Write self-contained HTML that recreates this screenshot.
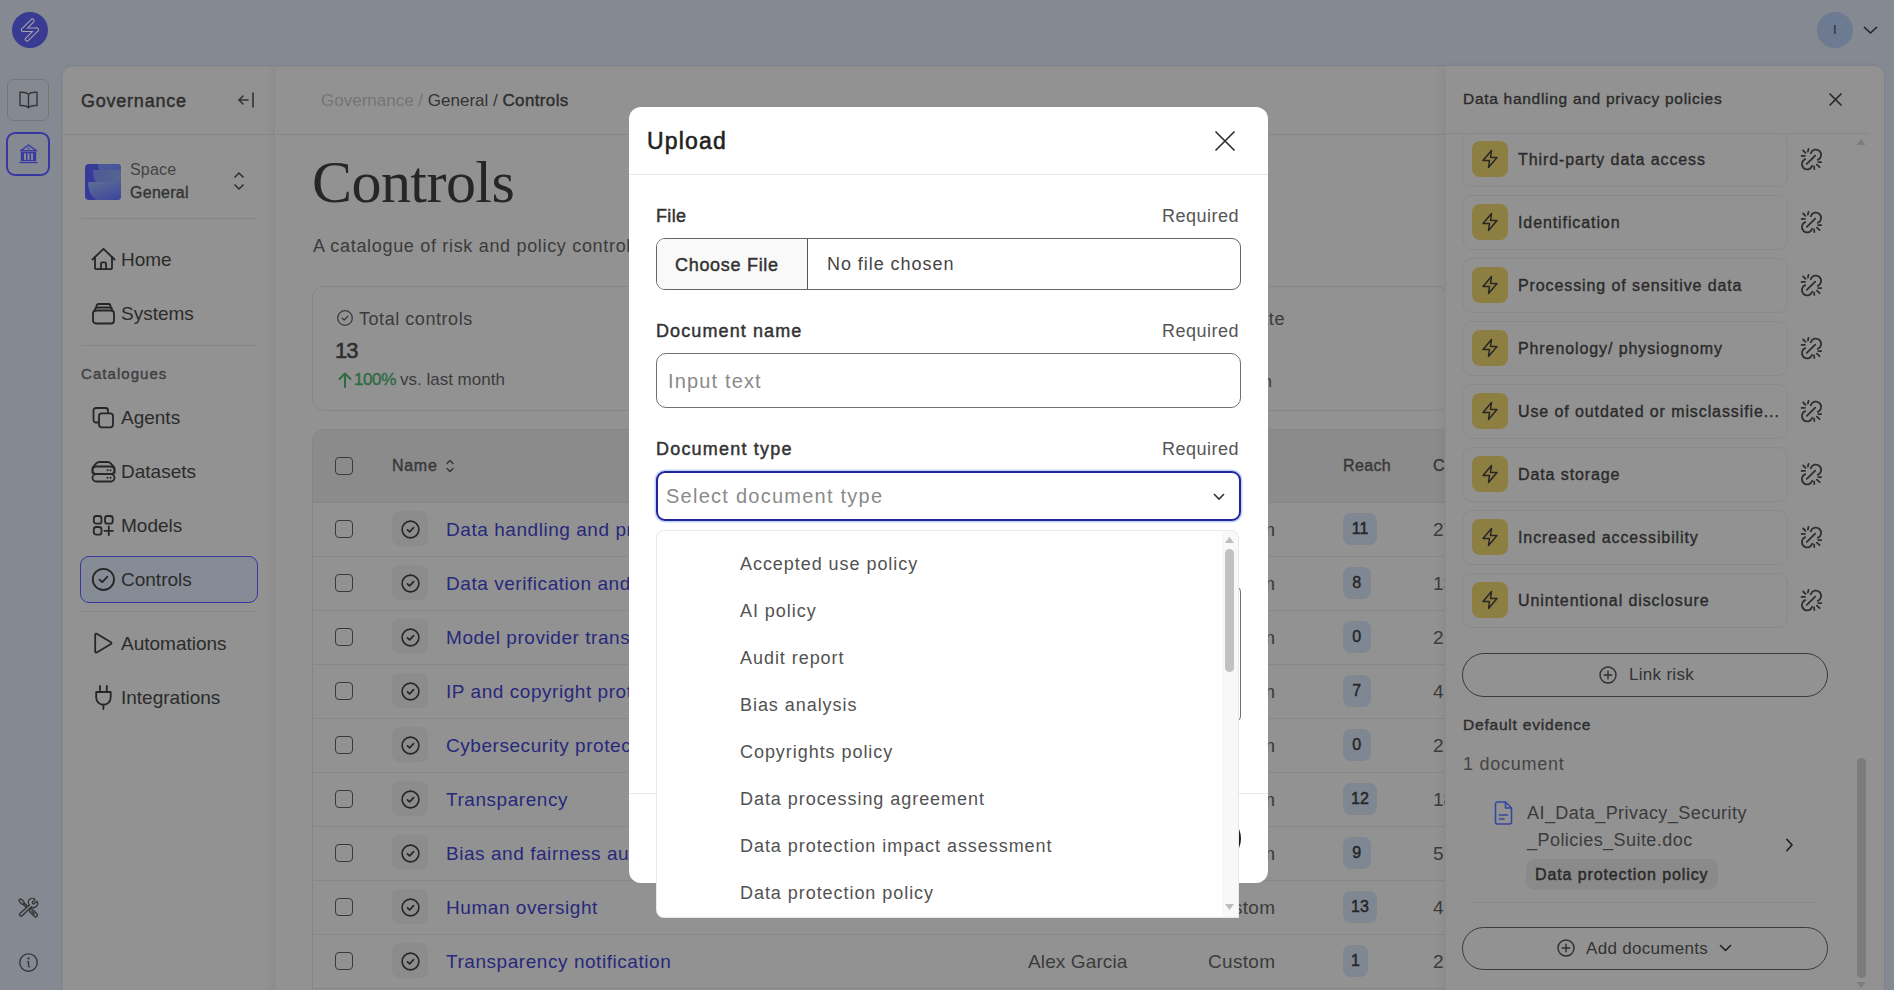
<!DOCTYPE html>
<html><head><meta charset="utf-8">
<style>
*{box-sizing:border-box;margin:0;padding:0}
html,body{width:1894px;height:990px;overflow:hidden}
body{background:#858a92;font-family:"Liberation Sans",sans-serif;position:relative;color:#2e2e2e}
.a{position:absolute}
.t{position:absolute;white-space:nowrap;line-height:24px;height:24px}
svg{position:absolute;overflow:visible}
.ln{position:absolute;height:1px;background:#868686}
</style></head><body>

<!-- top bar -->
<div class="a" style="left:12px;top:12px;width:36px;height:36px;border-radius:50%;background:#383b91"></div>
<svg style="left:10px;top:10px" width="40" height="40" viewBox="0 0 40 40" fill="none" stroke-linecap="round">
  <g stroke="#a3a3ae" stroke-width="4.6"><path d="M13.3 19.8 L22.3 10.8"/><path d="M13.3 19.8 L26.6 19.8"/><path d="M26.6 19.8 L17 29.3"/></g>
  <g stroke="#383b91" stroke-width="2.4"><path d="M13.3 19.8 L22.3 10.8"/><path d="M13.3 19.8 L26.6 19.8"/><path d="M26.6 19.8 L17 29.3"/></g>
</svg>
<div class="a" style="left:1817px;top:12px;width:36px;height:36px;border-radius:50%;background:#6c7b92"></div>
<div class="t" style="left:1833px;top:18px;font-size:13px;color:#2a2a2a">I</div>
<svg style="left:1863px;top:26px" width="15" height="8" viewBox="0 0 15 8" fill="none" stroke="#222" stroke-width="1.6"><path d="M1 1 L7.5 7 L14 1"/></svg>

<!-- left rail -->
<div class="a" style="left:7px;top:79px;width:42px;height:42px;border:1px solid #767676;border-radius:7px"></div>
<svg style="left:19px;top:91px" width="19" height="18" viewBox="0 0 19 18" fill="none" stroke="#363636" stroke-width="1.4" stroke-linejoin="round" stroke-linecap="round"><path d="M9.5 3.2 C8 1.6 5 0.9 1 1.3 V14.6 C5 14.2 8 15 9.5 16.8 C11 15 14 14.2 18 14.6 V1.3 C14 0.9 11 1.6 9.5 3.2 Z M9.5 3.2 V16.5"/></svg>
<div class="a" style="left:6px;top:132px;width:44px;height:44px;border:2.5px solid #3838a3;border-radius:9px"></div>
<svg style="left:19px;top:144px" width="19" height="20" viewBox="0 0 19 20"><path d="M9.5 1 L17.5 6.8 H1.5 Z" fill="none" stroke="#3a3aa3" stroke-width="1.5" stroke-linejoin="round"/><circle cx="9.5" cy="4.6" r="1" fill="#3a3aa3"/><path d="M1.8 8 H17.2 V17 H1.8 Z M5 9.2 V16 H7 V9.2 Z M8.5 9.2 V16 H10.5 V9.2 Z M12 9.2 V16 H14 V9.2 Z" fill="#3a3aa3" fill-rule="evenodd"/><rect x="0.5" y="17.8" width="18" height="1.4" fill="#3a3aa3"/></svg>
<svg style="left:14px;top:894px" width="28" height="28" viewBox="0 0 28 28" fill="none" stroke="#353535" stroke-width="1.4" stroke-linecap="round" stroke-linejoin="round">
<rect x="-2.9" y="-1.5" width="5.8" height="3" rx="1.5" transform="translate(7.6 7.6) rotate(45)"/>
<path d="M10.6 9.4 L13.3 12.1 M9.4 10.6 L12.1 13.3"/>
<rect x="-4.9" y="-1.8" width="9.8" height="3.6" rx="1.8" transform="translate(19.4 18.9) rotate(45)"/>
<path d="M17.7 17.3 L20.3 19.9"/>
<path d="M21.0 5.5 A3.9 3.9 0 0 0 15.4 11.0 L6.0 19.5 A1.55 1.55 0 0 0 8.2 21.7 L17.3 12.7 A3.9 3.9 0 0 0 22.77 7.24 L20.43 9.58 A1.25 1.25 0 0 1 18.67 7.82 Z"/>
</svg>
<svg style="left:19px;top:953px" width="19" height="19" viewBox="0 0 19 19" fill="none" stroke="#363636" stroke-width="1.35" stroke-linecap="round" stroke-linejoin="round"><circle cx="9.5" cy="9.5" r="8.7"/><path d="M8.6 8.6 H9.5 V12.9 Q9.6 13.8 10.5 13.9"/><circle cx="9.5" cy="5.4" r="0.45" fill="#363636"/></svg>

<!-- main panel -->
<div class="a" style="left:62px;top:66px;width:1822px;height:940px;background:#929292;border-radius:10px;border:1px solid #8a8a8a;box-shadow:0 0 2px rgba(60,70,90,0.25)"></div>

<!-- sidebar -->
<div class="a" style="left:266px;top:67px;width:8px;height:930px;background:linear-gradient(90deg,rgba(0,0,0,0),rgba(0,0,0,0.035))"></div><div class="a" style="left:274px;top:67px;width:1px;height:930px;background:#8a8a8a"></div>
<div class="t" style="left:81px;top:89px;font-size:18px;color:#2e2e2e;-webkit-text-stroke:0.45px #2e2e2e;letter-spacing:0.77px">Governance</div>
<svg style="left:237px;top:92px" width="18" height="16" viewBox="0 0 18 16" fill="none" stroke="#333" stroke-width="1.6" stroke-linecap="round"><path d="M16 1 V15 M11 8 H2 M6 4 L2 8 L6 12"/></svg>
<div class="ln" style="left:62px;top:134px;width:213px"></div>

<div class="a" style="left:85px;top:164px;width:36px;height:36px;border-radius:4px;background:#383a9a;overflow:hidden">
<div class="a" style="left:13px;top:0;width:30px;height:6px;border-bottom-left-radius:2px 6px;background:linear-gradient(90deg,#4a5a98,#44539a)"></div>
<div class="a" style="left:7.5px;top:6px;width:36px;height:11.5px;border-bottom-left-radius:4px 11.5px;background:linear-gradient(90deg,#4c5b96,#56688f)"></div>
<div class="a" style="left:3.3px;top:17.5px;width:40px;height:19px;border-bottom-left-radius:13px 19px;background:linear-gradient(160deg,#5a6b95 10%,#46529a 60%,#3a3f9c)"></div>
</div>
<div class="t" style="left:130px;top:158px;font-size:16px;color:#444;letter-spacing:0.2px">Space</div>
<div class="t" style="left:130px;top:181px;font-size:16px;color:#333;-webkit-text-stroke:0.35px #333;letter-spacing:0.27px">General</div>
<svg style="left:233px;top:172px" width="12" height="18" viewBox="0 0 12 18" fill="none" stroke="#2e2e2e" stroke-width="1.5"><path d="M1.5 5.5 L6 1 L10.5 5.5 M1.5 12.5 L6 17 L10.5 12.5"/></svg>
<div class="ln" style="left:81px;top:218px;width:176px"></div>

<div class="ln" style="left:81px;top:345px;width:176px"></div>
<div class="t" style="left:81px;top:362px;font-size:15px;color:#404040;-webkit-text-stroke:0.4px #404040;letter-spacing:1.05px">Catalogues</div>
<div class="a" style="left:80px;top:556px;width:178px;height:47px;border:1px solid #3838a0;border-radius:9px;background:#868c95"></div>
<div class="ln" style="left:81px;top:611px;width:176px"></div>


<svg style="left:91px;top:247px" width="25" height="24" viewBox="0 0 25 24" fill="none" stroke="#262626" stroke-width="1.8" stroke-linecap="round" stroke-linejoin="round"><path d="M1.5 12.5 L12.5 1.8 L23.5 12.5"/><path d="M4 10 V21 a1.2 1.2 0 0 0 1.2 1.2 H19.8 a1.2 1.2 0 0 0 1.2 -1.2 V10"/><path d="M10 22 V16.5 a1.2 1.2 0 0 1 1.2 -1.2 H13.8 a1.2 1.2 0 0 1 1.2 1.2 V22"/></svg>
<div class="t" style="left:121px;top:248px;font-size:19px;color:#2b2b2b">Home</div>
<svg style="left:91px;top:301px" width="25" height="24" viewBox="0 0 25 24" fill="none" stroke="#262626" stroke-width="1.8" stroke-linecap="round" stroke-linejoin="round"><rect x="2" y="9.5" width="21" height="13" rx="3"/><path d="M4 9.5 V8.5 a2 2 0 0 1 2 -2 H19 a2 2 0 0 1 2 2 V9.5"/><path d="M5.5 6.5 V5 a2 2 0 0 1 2 -2 H17.5 a2 2 0 0 1 2 2 V6.5"/></svg>
<div class="t" style="left:121px;top:302px;font-size:19px;color:#2b2b2b">Systems</div>
<svg style="left:91px;top:405px" width="25" height="24" viewBox="0 0 25 24" fill="none" stroke="#262626" stroke-width="1.8" stroke-linecap="round" stroke-linejoin="round"><path d="M7.5 17.5 H5 a2.5 2.5 0 0 1 -2.5 -2.5 V5.5 a2.5 2.5 0 0 1 2.5 -2.5 H14.5 a2.5 2.5 0 0 1 2.5 2.5 V8"/><rect x="8" y="8.3" width="14" height="14" rx="2.8"/></svg>
<div class="t" style="left:121px;top:406px;font-size:19px;color:#2b2b2b">Agents</div>
<svg style="left:91px;top:459px" width="25" height="24" viewBox="0 0 25 24" fill="none" stroke="#262626" stroke-width="1.8" stroke-linecap="round" stroke-linejoin="round"><path d="M1.5 14 V9.5 a3 3 0 0 1 1 -2.2 L5.5 4.2 a4 4 0 0 1 2.8 -1.2 H16.7 a4 4 0 0 1 2.8 1.2 L22.5 7.3 a3 3 0 0 1 1 2.2 V14"/><rect x="1.5" y="7.5" width="22" height="7.5" rx="3.7"/><rect x="1.5" y="15" width="22" height="7.5" rx="3.7"/><path d="M16.5 11.2 h0.1 M19.5 11.2 h0.1 M16.5 18.7 h0.1 M19.5 18.7 h0.1" stroke-width="1.9"/></svg>
<div class="t" style="left:121px;top:460px;font-size:19px;color:#2b2b2b">Datasets</div>
<svg style="left:91px;top:513px" width="25" height="24" viewBox="0 0 25 24" fill="none" stroke="#262626" stroke-width="1.8" stroke-linecap="round" stroke-linejoin="round"><rect x="2.8" y="3" width="7.7" height="7.7" rx="2.5"/><rect x="14" y="3" width="7.7" height="7.7" rx="2.5"/><rect x="2.8" y="14" width="7.7" height="7.7" rx="2.5"/><path d="M17.8 13.5 V22 M13.5 17.8 H22"/></svg>
<div class="t" style="left:121px;top:514px;font-size:19px;color:#2b2b2b">Models</div>
<svg style="left:91px;top:567px" width="25" height="24" viewBox="0 0 25 24" fill="none" stroke="#262626" stroke-width="1.8" stroke-linecap="round" stroke-linejoin="round"><circle cx="12.4" cy="12.4" r="10.6"/><path d="M8.5 12.6 L11.2 15.2 L16.3 9.8"/></svg>
<div class="t" style="left:121px;top:568px;font-size:19px;color:#2b2b2b">Controls</div>
<svg style="left:91px;top:631px" width="25" height="24" viewBox="0 0 25 24" fill="none" stroke="#262626" stroke-width="1.8" stroke-linecap="round" stroke-linejoin="round"><path d="M4.2 3.6 a1 1 0 0 1 1.5 -0.9 L20 11.2 a1 1 0 0 1 0 1.7 L5.7 21.4 a1 1 0 0 1 -1.5 -0.9 Z"/></svg>
<div class="t" style="left:121px;top:632px;font-size:19px;color:#2b2b2b">Automations</div>
<svg style="left:91px;top:685px" width="25" height="24" viewBox="0 0 25 24" fill="none" stroke="#262626" stroke-width="1.8" stroke-linecap="round" stroke-linejoin="round"><path d="M9 1 V7 M15.8 1 V7"/><path d="M5.2 7 H19.7 V12.5 a7.2 7.2 0 0 1 -14.5 0 Z"/><path d="M12.4 19.7 V24"/></svg>
<div class="t" style="left:121px;top:686px;font-size:19px;color:#2b2b2b">Integrations</div>


<!-- main content -->
<div class="t" style="left:321px;top:89px;font-size:17px;color:#757575">Governance <span style="color:#757575">/</span> <span style="color:#333">General /</span> <span style="color:#2e2e2e;-webkit-text-stroke:0.4px #2e2e2e;letter-spacing:0.36px">Controls</span></div>
<div class="ln" style="left:276px;top:134px;width:1170px"></div>
<div class="t" style="left:312px;top:150px;font-size:60px;line-height:64px;height:64px;font-family:'Liberation Serif',serif;color:#262626;letter-spacing:-0.55px">Controls</div>
<div class="t" style="left:313px;top:234px;font-size:18px;color:#3b3b3b;letter-spacing:0.68px">A catalogue of risk and policy controls for your AI systems</div>


<!-- stats cards -->
<div class="a" style="left:312px;top:286px;width:368px;height:125px;border:1px solid #868686;border-radius:12px"></div>
<svg style="left:336px;top:309px" width="18" height="18" viewBox="0 0 18 18" fill="none" stroke="#3a3a3a" stroke-width="1.3" stroke-linecap="round" stroke-linejoin="round"><circle cx="9" cy="9" r="7.3"/><path d="M6.2 9.2 L8.2 11 L11.8 7.2"/></svg>
<div class="t" style="left:359px;top:307px;font-size:18px;color:#3b3b3b;letter-spacing:0.55px">Total controls</div>
<div class="t" style="left:335px;top:339px;font-size:22px;color:#2e2e2e;-webkit-text-stroke:0.55px #2e2e2e;letter-spacing:-1px">13</div>
<svg style="left:338px;top:372px" width="14" height="16" viewBox="0 0 14 16" fill="none" stroke="#2f6b45" stroke-width="2" stroke-linecap="round" stroke-linejoin="round"><path d="M7 15 V2 M1.5 7 L7 1.5 L12.5 7"/></svg>
<div class="t" style="left:354px;top:368px;font-size:17px;color:#2f6b45;-webkit-text-stroke:0.4px #2f6b45;letter-spacing:-0.4px">100%</div>
<div class="t" style="left:400px;top:368px;font-size:17px;color:#3b3b3b">vs. last month</div>
<div class="a" style="left:1078px;top:286px;width:371px;height:125px;border:1px solid #868686;border-radius:12px"></div>
<div class="t" style="right:609px;top:307px;font-size:18px;color:#3b3b3b;letter-spacing:0.55px">Completion rate</div>
<div class="t" style="right:622px;top:370px;font-size:17px;color:#3b3b3b"><b style="color:#2f6b45">&#8593;50%</b> vs. last month</div>

<!-- table -->
<div class="a" style="left:312px;top:429px;width:1141px;height:600px;border:1px solid #868686;border-radius:12px;overflow:hidden">
  <div class="a" style="left:0;top:0;width:100%;height:73px;background:#8b8b8b;border-bottom:1px solid #868686"></div>
</div>
<div class="a" style="left:335px;top:457px;width:18px;height:18px;border:1.5px solid #3a3a3a;border-radius:4px"></div>
<div class="t" style="left:392px;top:454px;font-size:16px;color:#383838;-webkit-text-stroke:0.4px #383838;letter-spacing:0.7px">Name</div>
<svg style="left:445px;top:459px" width="10" height="14" viewBox="0 0 10 14" fill="none" stroke="#333" stroke-width="1.4" stroke-linecap="round" stroke-linejoin="round"><path d="M2 4.5 L5 1.5 L8 4.5 M2 9.5 L5 12.5 L8 9.5"/></svg>
<div class="t" style="left:1343px;top:454px;font-size:16px;color:#383838;-webkit-text-stroke:0.4px #383838;letter-spacing:0.35px">Reach</div>
<div class="t" style="left:1433px;top:454px;font-size:16px;color:#383838;-webkit-text-stroke:0.4px #383838">C</div>
<div class="a" style="left:335px;top:520px;width:18px;height:18px;border:1.5px solid #3a3a3a;border-radius:4px"></div>
<div class="a" style="left:392px;top:511px;width:36px;height:35px;border-radius:8px;background:#8c8c8c"></div>
<svg style="left:401px;top:520px" width="19" height="19" viewBox="0 0 19 19" fill="none" stroke="#262626" stroke-width="1.6" stroke-linecap="round" stroke-linejoin="round"><circle cx="9.5" cy="9.5" r="8.4"/><path d="M6.4 9.8 L8.6 11.9 L12.6 7.6"/></svg>
<div class="t" style="left:446px;top:518px;font-size:19px;color:#28287c;letter-spacing:0.55px">Data handling and privacy policies</div>
<div class="t" style="left:1028px;top:518px;font-size:19px;color:#3b3b3b;letter-spacing:0.12px">Alex Garcia</div>
<div class="t" style="left:1208px;top:518px;font-size:19px;color:#3b3b3b;letter-spacing:0.3px">Custom</div>
<div class="a" style="left:1343px;top:513px;height:32px;width:34px;border-radius:8px;background:#7f8792;font-size:16px;line-height:32px;color:#262626;-webkit-text-stroke:0.45px #262626;text-align:center">11</div>
<div class="t" style="left:1433px;top:518px;font-size:19px;color:#3b3b3b">27</div>
<div class="ln" style="left:314px;top:556px;width:1132px;background:#878787"></div>
<div class="a" style="left:335px;top:574px;width:18px;height:18px;border:1.5px solid #3a3a3a;border-radius:4px"></div>
<div class="a" style="left:392px;top:565px;width:36px;height:35px;border-radius:8px;background:#8c8c8c"></div>
<svg style="left:401px;top:574px" width="19" height="19" viewBox="0 0 19 19" fill="none" stroke="#262626" stroke-width="1.6" stroke-linecap="round" stroke-linejoin="round"><circle cx="9.5" cy="9.5" r="8.4"/><path d="M6.4 9.8 L8.6 11.9 L12.6 7.6"/></svg>
<div class="t" style="left:446px;top:572px;font-size:19px;color:#28287c;letter-spacing:0.55px">Data verification and quality</div>
<div class="t" style="left:1028px;top:572px;font-size:19px;color:#3b3b3b;letter-spacing:0.12px">Alex Garcia</div>
<div class="t" style="left:1208px;top:572px;font-size:19px;color:#3b3b3b;letter-spacing:0.3px">Custom</div>
<div class="a" style="left:1343px;top:567px;height:32px;width:27.5px;border-radius:8px;background:#7f8792;font-size:16px;line-height:32px;color:#262626;-webkit-text-stroke:0.45px #262626;text-align:center">8</div>
<div class="t" style="left:1433px;top:572px;font-size:19px;color:#3b3b3b">13</div>
<div class="ln" style="left:314px;top:610px;width:1132px;background:#878787"></div>
<div class="a" style="left:335px;top:628px;width:18px;height:18px;border:1.5px solid #3a3a3a;border-radius:4px"></div>
<div class="a" style="left:392px;top:619px;width:36px;height:35px;border-radius:8px;background:#8c8c8c"></div>
<svg style="left:401px;top:628px" width="19" height="19" viewBox="0 0 19 19" fill="none" stroke="#262626" stroke-width="1.6" stroke-linecap="round" stroke-linejoin="round"><circle cx="9.5" cy="9.5" r="8.4"/><path d="M6.4 9.8 L8.6 11.9 L12.6 7.6"/></svg>
<div class="t" style="left:446px;top:626px;font-size:19px;color:#28287c;letter-spacing:0.55px">Model provider transparency</div>
<div class="t" style="left:1028px;top:626px;font-size:19px;color:#3b3b3b;letter-spacing:0.12px">Alex Garcia</div>
<div class="t" style="left:1208px;top:626px;font-size:19px;color:#3b3b3b;letter-spacing:0.3px">Custom</div>
<div class="a" style="left:1343px;top:621px;height:32px;width:27.5px;border-radius:8px;background:#7f8792;font-size:16px;line-height:32px;color:#262626;-webkit-text-stroke:0.45px #262626;text-align:center">0</div>
<div class="t" style="left:1433px;top:626px;font-size:19px;color:#3b3b3b">2</div>
<div class="ln" style="left:314px;top:664px;width:1132px;background:#878787"></div>
<div class="a" style="left:335px;top:682px;width:18px;height:18px;border:1.5px solid #3a3a3a;border-radius:4px"></div>
<div class="a" style="left:392px;top:673px;width:36px;height:35px;border-radius:8px;background:#8c8c8c"></div>
<svg style="left:401px;top:682px" width="19" height="19" viewBox="0 0 19 19" fill="none" stroke="#262626" stroke-width="1.6" stroke-linecap="round" stroke-linejoin="round"><circle cx="9.5" cy="9.5" r="8.4"/><path d="M6.4 9.8 L8.6 11.9 L12.6 7.6"/></svg>
<div class="t" style="left:446px;top:680px;font-size:19px;color:#28287c;letter-spacing:0.55px">IP and copyright protection</div>
<div class="t" style="left:1028px;top:680px;font-size:19px;color:#3b3b3b;letter-spacing:0.12px">Alex Garcia</div>
<div class="t" style="left:1208px;top:680px;font-size:19px;color:#3b3b3b;letter-spacing:0.3px">Custom</div>
<div class="a" style="left:1343px;top:675px;height:32px;width:27.5px;border-radius:8px;background:#7f8792;font-size:16px;line-height:32px;color:#262626;-webkit-text-stroke:0.45px #262626;text-align:center">7</div>
<div class="t" style="left:1433px;top:680px;font-size:19px;color:#3b3b3b">4</div>
<div class="ln" style="left:314px;top:718px;width:1132px;background:#878787"></div>
<div class="a" style="left:335px;top:736px;width:18px;height:18px;border:1.5px solid #3a3a3a;border-radius:4px"></div>
<div class="a" style="left:392px;top:727px;width:36px;height:35px;border-radius:8px;background:#8c8c8c"></div>
<svg style="left:401px;top:736px" width="19" height="19" viewBox="0 0 19 19" fill="none" stroke="#262626" stroke-width="1.6" stroke-linecap="round" stroke-linejoin="round"><circle cx="9.5" cy="9.5" r="8.4"/><path d="M6.4 9.8 L8.6 11.9 L12.6 7.6"/></svg>
<div class="t" style="left:446px;top:734px;font-size:19px;color:#28287c;letter-spacing:0.55px">Cybersecurity protections</div>
<div class="t" style="left:1028px;top:734px;font-size:19px;color:#3b3b3b;letter-spacing:0.12px">Alex Garcia</div>
<div class="t" style="left:1208px;top:734px;font-size:19px;color:#3b3b3b;letter-spacing:0.3px">Custom</div>
<div class="a" style="left:1343px;top:729px;height:32px;width:27.5px;border-radius:8px;background:#7f8792;font-size:16px;line-height:32px;color:#262626;-webkit-text-stroke:0.45px #262626;text-align:center">0</div>
<div class="t" style="left:1433px;top:734px;font-size:19px;color:#3b3b3b">2</div>
<div class="ln" style="left:314px;top:772px;width:1132px;background:#878787"></div>
<div class="a" style="left:335px;top:790px;width:18px;height:18px;border:1.5px solid #3a3a3a;border-radius:4px"></div>
<div class="a" style="left:392px;top:781px;width:36px;height:35px;border-radius:8px;background:#8c8c8c"></div>
<svg style="left:401px;top:790px" width="19" height="19" viewBox="0 0 19 19" fill="none" stroke="#262626" stroke-width="1.6" stroke-linecap="round" stroke-linejoin="round"><circle cx="9.5" cy="9.5" r="8.4"/><path d="M6.4 9.8 L8.6 11.9 L12.6 7.6"/></svg>
<div class="t" style="left:446px;top:788px;font-size:19px;color:#28287c;letter-spacing:0.55px">Transparency</div>
<div class="t" style="left:1028px;top:788px;font-size:19px;color:#3b3b3b;letter-spacing:0.12px">Alex Garcia</div>
<div class="t" style="left:1208px;top:788px;font-size:19px;color:#3b3b3b;letter-spacing:0.3px">Custom</div>
<div class="a" style="left:1343px;top:783px;height:32px;width:34px;border-radius:8px;background:#7f8792;font-size:16px;line-height:32px;color:#262626;-webkit-text-stroke:0.45px #262626;text-align:center">12</div>
<div class="t" style="left:1433px;top:788px;font-size:19px;color:#3b3b3b">18</div>
<div class="ln" style="left:314px;top:826px;width:1132px;background:#878787"></div>
<div class="a" style="left:335px;top:844px;width:18px;height:18px;border:1.5px solid #3a3a3a;border-radius:4px"></div>
<div class="a" style="left:392px;top:835px;width:36px;height:35px;border-radius:8px;background:#8c8c8c"></div>
<svg style="left:401px;top:844px" width="19" height="19" viewBox="0 0 19 19" fill="none" stroke="#262626" stroke-width="1.6" stroke-linecap="round" stroke-linejoin="round"><circle cx="9.5" cy="9.5" r="8.4"/><path d="M6.4 9.8 L8.6 11.9 L12.6 7.6"/></svg>
<div class="t" style="left:446px;top:842px;font-size:19px;color:#28287c;letter-spacing:0.55px">Bias and fairness audits</div>
<div class="t" style="left:1028px;top:842px;font-size:19px;color:#3b3b3b;letter-spacing:0.12px">Alex Garcia</div>
<div class="t" style="left:1208px;top:842px;font-size:19px;color:#3b3b3b;letter-spacing:0.3px">Custom</div>
<div class="a" style="left:1343px;top:837px;height:32px;width:27.5px;border-radius:8px;background:#7f8792;font-size:16px;line-height:32px;color:#262626;-webkit-text-stroke:0.45px #262626;text-align:center">9</div>
<div class="t" style="left:1433px;top:842px;font-size:19px;color:#3b3b3b">5</div>
<div class="ln" style="left:314px;top:880px;width:1132px;background:#878787"></div>
<div class="a" style="left:335px;top:898px;width:18px;height:18px;border:1.5px solid #3a3a3a;border-radius:4px"></div>
<div class="a" style="left:392px;top:889px;width:36px;height:35px;border-radius:8px;background:#8c8c8c"></div>
<svg style="left:401px;top:898px" width="19" height="19" viewBox="0 0 19 19" fill="none" stroke="#262626" stroke-width="1.6" stroke-linecap="round" stroke-linejoin="round"><circle cx="9.5" cy="9.5" r="8.4"/><path d="M6.4 9.8 L8.6 11.9 L12.6 7.6"/></svg>
<div class="t" style="left:446px;top:896px;font-size:19px;color:#28287c;letter-spacing:0.55px">Human oversight</div>
<div class="t" style="left:1028px;top:896px;font-size:19px;color:#3b3b3b;letter-spacing:0.12px">Alex Garcia</div>
<div class="t" style="left:1208px;top:896px;font-size:19px;color:#3b3b3b;letter-spacing:0.3px">Custom</div>
<div class="a" style="left:1343px;top:891px;height:32px;width:34px;border-radius:8px;background:#7f8792;font-size:16px;line-height:32px;color:#262626;-webkit-text-stroke:0.45px #262626;text-align:center">13</div>
<div class="t" style="left:1433px;top:896px;font-size:19px;color:#3b3b3b">4</div>
<div class="ln" style="left:314px;top:934px;width:1132px;background:#878787"></div>
<div class="a" style="left:335px;top:952px;width:18px;height:18px;border:1.5px solid #3a3a3a;border-radius:4px"></div>
<div class="a" style="left:392px;top:943px;width:36px;height:35px;border-radius:8px;background:#8c8c8c"></div>
<svg style="left:401px;top:952px" width="19" height="19" viewBox="0 0 19 19" fill="none" stroke="#262626" stroke-width="1.6" stroke-linecap="round" stroke-linejoin="round"><circle cx="9.5" cy="9.5" r="8.4"/><path d="M6.4 9.8 L8.6 11.9 L12.6 7.6"/></svg>
<div class="t" style="left:446px;top:950px;font-size:19px;color:#28287c;letter-spacing:0.55px">Transparency notification</div>
<div class="t" style="left:1028px;top:950px;font-size:19px;color:#3b3b3b;letter-spacing:0.12px">Alex Garcia</div>
<div class="t" style="left:1208px;top:950px;font-size:19px;color:#3b3b3b;letter-spacing:0.3px">Custom</div>
<div class="a" style="left:1343px;top:945px;height:32px;width:25px;border-radius:8px;background:#7f8792;font-size:16px;line-height:32px;color:#262626;-webkit-text-stroke:0.45px #262626;text-align:center">1</div>
<div class="t" style="left:1433px;top:950px;font-size:19px;color:#3b3b3b">2</div>
<div class="ln" style="left:314px;top:988px;width:1132px;background:#878787"></div>

<!-- right panel -->
<div class="a" style="left:1445px;top:66px;width:439px;height:940px;background:#929292;border-radius:0 9px 0 0;box-shadow:-4px 0 7px rgba(0,0,0,0.045);border-left:1px solid #8c8c8c"></div>
<div class="a" style="left:1446px;top:134px;width:423px;height:856px;overflow:hidden">
<div class="a" style="left:16px;top:-2px;width:326px;height:55px;border:1px solid #8a8a8a;border-radius:10px"></div>
<div class="a" style="left:26px;top:7px;width:36px;height:36px;border-radius:8px;background:#8d7f42"></div>
<svg style="left:34px;top:15px" width="20" height="20" viewBox="0 0 20 20" fill="none" stroke="#262626" stroke-width="1.5" stroke-linejoin="round"><path d="M11.5 1.5 L3 11.5 H9.5 L8.5 18.5 L17 8.5 H10.5 Z"/></svg>
<div class="t" style="left:72px;top:14px;font-size:16px;color:#2a2a2a;-webkit-text-stroke:0.35px #2a2a2a;letter-spacing:0.9px">Third-party data access</div>
<svg style="left:349px;top:9px" width="32" height="32" viewBox="0 0 32 32" fill="none" stroke="#2e2e2e" stroke-width="1.8" stroke-linecap="round"><path d="M15.8 10.2 A5.3 5.3 0 1 1 22.8 16.8"/><path d="M17.2 22.8 A5.3 5.3 0 1 1 10.2 16.2"/><path d="M11.8 20.8 L20.2 12.6"/><path d="M8.2 7.5 L10.5 9.8 M13.5 5.9 L12.9 8.5 M6.6 12.9 H9.9 M23.3 19.1 H26.2 M21.9 21.6 L24.6 24.1 M19.1 23.5 L19.3 26"/></svg>
<div class="a" style="left:16px;top:61px;width:326px;height:55px;border:1px solid #8a8a8a;border-radius:10px"></div>
<div class="a" style="left:26px;top:70px;width:36px;height:36px;border-radius:8px;background:#8d7f42"></div>
<svg style="left:34px;top:78px" width="20" height="20" viewBox="0 0 20 20" fill="none" stroke="#262626" stroke-width="1.5" stroke-linejoin="round"><path d="M11.5 1.5 L3 11.5 H9.5 L8.5 18.5 L17 8.5 H10.5 Z"/></svg>
<div class="t" style="left:72px;top:77px;font-size:16px;color:#2a2a2a;-webkit-text-stroke:0.35px #2a2a2a;letter-spacing:0.9px">Identification</div>
<svg style="left:349px;top:72px" width="32" height="32" viewBox="0 0 32 32" fill="none" stroke="#2e2e2e" stroke-width="1.8" stroke-linecap="round"><path d="M15.8 10.2 A5.3 5.3 0 1 1 22.8 16.8"/><path d="M17.2 22.8 A5.3 5.3 0 1 1 10.2 16.2"/><path d="M11.8 20.8 L20.2 12.6"/><path d="M8.2 7.5 L10.5 9.8 M13.5 5.9 L12.9 8.5 M6.6 12.9 H9.9 M23.3 19.1 H26.2 M21.9 21.6 L24.6 24.1 M19.1 23.5 L19.3 26"/></svg>
<div class="a" style="left:16px;top:124px;width:326px;height:55px;border:1px solid #8a8a8a;border-radius:10px"></div>
<div class="a" style="left:26px;top:133px;width:36px;height:36px;border-radius:8px;background:#8d7f42"></div>
<svg style="left:34px;top:141px" width="20" height="20" viewBox="0 0 20 20" fill="none" stroke="#262626" stroke-width="1.5" stroke-linejoin="round"><path d="M11.5 1.5 L3 11.5 H9.5 L8.5 18.5 L17 8.5 H10.5 Z"/></svg>
<div class="t" style="left:72px;top:140px;font-size:16px;color:#2a2a2a;-webkit-text-stroke:0.35px #2a2a2a;letter-spacing:0.9px">Processing of sensitive data</div>
<svg style="left:349px;top:135px" width="32" height="32" viewBox="0 0 32 32" fill="none" stroke="#2e2e2e" stroke-width="1.8" stroke-linecap="round"><path d="M15.8 10.2 A5.3 5.3 0 1 1 22.8 16.8"/><path d="M17.2 22.8 A5.3 5.3 0 1 1 10.2 16.2"/><path d="M11.8 20.8 L20.2 12.6"/><path d="M8.2 7.5 L10.5 9.8 M13.5 5.9 L12.9 8.5 M6.6 12.9 H9.9 M23.3 19.1 H26.2 M21.9 21.6 L24.6 24.1 M19.1 23.5 L19.3 26"/></svg>
<div class="a" style="left:16px;top:187px;width:326px;height:55px;border:1px solid #8a8a8a;border-radius:10px"></div>
<div class="a" style="left:26px;top:196px;width:36px;height:36px;border-radius:8px;background:#8d7f42"></div>
<svg style="left:34px;top:204px" width="20" height="20" viewBox="0 0 20 20" fill="none" stroke="#262626" stroke-width="1.5" stroke-linejoin="round"><path d="M11.5 1.5 L3 11.5 H9.5 L8.5 18.5 L17 8.5 H10.5 Z"/></svg>
<div class="t" style="left:72px;top:203px;font-size:16px;color:#2a2a2a;-webkit-text-stroke:0.35px #2a2a2a;letter-spacing:0.9px">Phrenology/ physiognomy</div>
<svg style="left:349px;top:198px" width="32" height="32" viewBox="0 0 32 32" fill="none" stroke="#2e2e2e" stroke-width="1.8" stroke-linecap="round"><path d="M15.8 10.2 A5.3 5.3 0 1 1 22.8 16.8"/><path d="M17.2 22.8 A5.3 5.3 0 1 1 10.2 16.2"/><path d="M11.8 20.8 L20.2 12.6"/><path d="M8.2 7.5 L10.5 9.8 M13.5 5.9 L12.9 8.5 M6.6 12.9 H9.9 M23.3 19.1 H26.2 M21.9 21.6 L24.6 24.1 M19.1 23.5 L19.3 26"/></svg>
<div class="a" style="left:16px;top:250px;width:326px;height:55px;border:1px solid #8a8a8a;border-radius:10px"></div>
<div class="a" style="left:26px;top:259px;width:36px;height:36px;border-radius:8px;background:#8d7f42"></div>
<svg style="left:34px;top:267px" width="20" height="20" viewBox="0 0 20 20" fill="none" stroke="#262626" stroke-width="1.5" stroke-linejoin="round"><path d="M11.5 1.5 L3 11.5 H9.5 L8.5 18.5 L17 8.5 H10.5 Z"/></svg>
<div class="t" style="left:72px;top:266px;font-size:16px;color:#2a2a2a;-webkit-text-stroke:0.35px #2a2a2a;letter-spacing:0.9px">Use of outdated or misclassifie...</div>
<svg style="left:349px;top:261px" width="32" height="32" viewBox="0 0 32 32" fill="none" stroke="#2e2e2e" stroke-width="1.8" stroke-linecap="round"><path d="M15.8 10.2 A5.3 5.3 0 1 1 22.8 16.8"/><path d="M17.2 22.8 A5.3 5.3 0 1 1 10.2 16.2"/><path d="M11.8 20.8 L20.2 12.6"/><path d="M8.2 7.5 L10.5 9.8 M13.5 5.9 L12.9 8.5 M6.6 12.9 H9.9 M23.3 19.1 H26.2 M21.9 21.6 L24.6 24.1 M19.1 23.5 L19.3 26"/></svg>
<div class="a" style="left:16px;top:313px;width:326px;height:55px;border:1px solid #8a8a8a;border-radius:10px"></div>
<div class="a" style="left:26px;top:322px;width:36px;height:36px;border-radius:8px;background:#8d7f42"></div>
<svg style="left:34px;top:330px" width="20" height="20" viewBox="0 0 20 20" fill="none" stroke="#262626" stroke-width="1.5" stroke-linejoin="round"><path d="M11.5 1.5 L3 11.5 H9.5 L8.5 18.5 L17 8.5 H10.5 Z"/></svg>
<div class="t" style="left:72px;top:329px;font-size:16px;color:#2a2a2a;-webkit-text-stroke:0.35px #2a2a2a;letter-spacing:0.9px">Data storage</div>
<svg style="left:349px;top:324px" width="32" height="32" viewBox="0 0 32 32" fill="none" stroke="#2e2e2e" stroke-width="1.8" stroke-linecap="round"><path d="M15.8 10.2 A5.3 5.3 0 1 1 22.8 16.8"/><path d="M17.2 22.8 A5.3 5.3 0 1 1 10.2 16.2"/><path d="M11.8 20.8 L20.2 12.6"/><path d="M8.2 7.5 L10.5 9.8 M13.5 5.9 L12.9 8.5 M6.6 12.9 H9.9 M23.3 19.1 H26.2 M21.9 21.6 L24.6 24.1 M19.1 23.5 L19.3 26"/></svg>
<div class="a" style="left:16px;top:376px;width:326px;height:55px;border:1px solid #8a8a8a;border-radius:10px"></div>
<div class="a" style="left:26px;top:385px;width:36px;height:36px;border-radius:8px;background:#8d7f42"></div>
<svg style="left:34px;top:393px" width="20" height="20" viewBox="0 0 20 20" fill="none" stroke="#262626" stroke-width="1.5" stroke-linejoin="round"><path d="M11.5 1.5 L3 11.5 H9.5 L8.5 18.5 L17 8.5 H10.5 Z"/></svg>
<div class="t" style="left:72px;top:392px;font-size:16px;color:#2a2a2a;-webkit-text-stroke:0.35px #2a2a2a;letter-spacing:0.9px">Increased accessibility</div>
<svg style="left:349px;top:387px" width="32" height="32" viewBox="0 0 32 32" fill="none" stroke="#2e2e2e" stroke-width="1.8" stroke-linecap="round"><path d="M15.8 10.2 A5.3 5.3 0 1 1 22.8 16.8"/><path d="M17.2 22.8 A5.3 5.3 0 1 1 10.2 16.2"/><path d="M11.8 20.8 L20.2 12.6"/><path d="M8.2 7.5 L10.5 9.8 M13.5 5.9 L12.9 8.5 M6.6 12.9 H9.9 M23.3 19.1 H26.2 M21.9 21.6 L24.6 24.1 M19.1 23.5 L19.3 26"/></svg>
<div class="a" style="left:16px;top:439px;width:326px;height:55px;border:1px solid #8a8a8a;border-radius:10px"></div>
<div class="a" style="left:26px;top:448px;width:36px;height:36px;border-radius:8px;background:#8d7f42"></div>
<svg style="left:34px;top:456px" width="20" height="20" viewBox="0 0 20 20" fill="none" stroke="#262626" stroke-width="1.5" stroke-linejoin="round"><path d="M11.5 1.5 L3 11.5 H9.5 L8.5 18.5 L17 8.5 H10.5 Z"/></svg>
<div class="t" style="left:72px;top:455px;font-size:16px;color:#2a2a2a;-webkit-text-stroke:0.35px #2a2a2a;letter-spacing:0.9px">Unintentional disclosure</div>
<svg style="left:349px;top:450px" width="32" height="32" viewBox="0 0 32 32" fill="none" stroke="#2e2e2e" stroke-width="1.8" stroke-linecap="round"><path d="M15.8 10.2 A5.3 5.3 0 1 1 22.8 16.8"/><path d="M17.2 22.8 A5.3 5.3 0 1 1 10.2 16.2"/><path d="M11.8 20.8 L20.2 12.6"/><path d="M8.2 7.5 L10.5 9.8 M13.5 5.9 L12.9 8.5 M6.6 12.9 H9.9 M23.3 19.1 H26.2 M21.9 21.6 L24.6 24.1 M19.1 23.5 L19.3 26"/></svg>
</div>
<div class="ln" style="left:1446px;top:133px;width:423px;background:#878787"></div>
<div class="t" style="left:1463px;top:87px;font-size:15.5px;color:#2a2a2a;-webkit-text-stroke:0.35px #2a2a2a;letter-spacing:0.71px">Data handling and privacy policies</div>
<svg style="left:1829px;top:93px" width="13" height="13" viewBox="0 0 13 13" fill="none" stroke="#2a2a2a" stroke-width="1.7" stroke-linecap="round"><path d="M1 1 L12 12 M12 1 L1 12"/></svg>
<svg style="left:1856px;top:138px" width="10" height="8" viewBox="0 0 10 8"><path d="M5 1 L9.5 7 H0.5 Z" fill="#7c7c7c"/></svg>
<div class="a" style="left:1857px;top:758px;width:9px;height:220px;border-radius:5px;background:#7c7c7c"></div>
<svg style="left:1856px;top:981px" width="10" height="8" viewBox="0 0 10 8"><path d="M5 7 L9.5 1 H0.5 Z" fill="#7c7c7c"/></svg>

<div class="a" style="left:1462px;top:653px;width:366px;height:44px;border:1.5px solid #3a3a3a;border-radius:22px"></div>
<svg style="left:1599px;top:666px" width="18" height="18" viewBox="0 0 18 18" fill="none" stroke="#2e2e2e" stroke-width="1.4" stroke-linecap="round"><circle cx="9" cy="9" r="8"/><path d="M9 5.2 V12.8 M5.2 9 H12.8"/></svg>
<div class="t" style="left:1629px;top:663px;font-size:17px;color:#333;letter-spacing:0.3px">Link risk</div>
<div class="t" style="left:1463px;top:713px;font-size:15.5px;color:#2e2e2e;-webkit-text-stroke:0.4px #2e2e2e;letter-spacing:0.8px">Default evidence</div>
<div class="t" style="left:1463px;top:752px;font-size:18px;color:#444;letter-spacing:0.75px">1 document</div>
<svg style="left:1493px;top:801px" width="21" height="24" viewBox="0 0 21 24" fill="none" stroke="#3446a0" stroke-width="1.5" stroke-linejoin="round" stroke-linecap="round"><path d="M2.5 3 a2 2 0 0 1 2 -2 H12.5 L18.5 7 V21 a2 2 0 0 1 -2 2 H4.5 a2 2 0 0 1 -2 -2 Z"/><path d="M12.5 1 V7 H18.5"/><path d="M6.5 14 H14.5 M6.5 18 H11"/></svg>
<div class="t" style="left:1527px;top:801px;font-size:18px;color:#3b3b3b;letter-spacing:0.45px">AI_Data_Privacy_Security</div>
<div class="t" style="left:1527px;top:828px;font-size:18px;color:#3b3b3b;letter-spacing:0.45px">_Policies_Suite.doc</div>
<div class="a" style="left:1526px;top:859px;width:192px;height:31px;border-radius:9px;background:#8a8a8a"></div>
<div class="t" style="left:1535px;top:863px;font-size:16px;color:#2a2a2a;-webkit-text-stroke:0.45px #2a2a2a;letter-spacing:0.89px">Data protection policy</div>
<svg style="left:1785px;top:838px" width="9" height="14" viewBox="0 0 9 14" fill="none" stroke="#222" stroke-width="1.8" stroke-linecap="round" stroke-linejoin="round"><path d="M2 1.5 L7 7 L2 12.5"/></svg>
<div class="ln" style="left:1472px;top:902px;width:346px;background:#888"></div>
<div class="a" style="left:1462px;top:927px;width:366px;height:43px;border:1.5px solid #3a3a3a;border-radius:22px"></div>
<svg style="left:1557px;top:939px" width="18" height="18" viewBox="0 0 18 18" fill="none" stroke="#2e2e2e" stroke-width="1.4" stroke-linecap="round"><circle cx="9" cy="9" r="8"/><path d="M9 5.2 V12.8 M5.2 9 H12.8"/></svg>
<div class="t" style="left:1586px;top:937px;font-size:17px;color:#333;letter-spacing:0.3px">Add documents</div>
<svg style="left:1719px;top:944px" width="13" height="8" viewBox="0 0 13 8" fill="none" stroke="#222" stroke-width="1.6" stroke-linecap="round" stroke-linejoin="round"><path d="M1.5 1.5 L6.5 6.5 L11.5 1.5"/></svg>

<!-- modal -->
<div class="a" style="left:629px;top:107px;width:639px;height:776px;background:#fff;border-radius:12px;overflow:hidden">
  <div class="a" style="left:0;top:67px;width:100%;height:1px;background:#e8e8e8"></div>
  <div class="a" style="left:0;top:686px;width:100%;height:1px;background:#e8e8e8"></div>
</div>
<div class="t" style="left:647px;top:128px;font-size:23px;line-height:26px;height:26px;color:#222;-webkit-text-stroke:0.55px #222;letter-spacing:1.2px">Upload</div>
<svg style="left:1215px;top:131px" width="20" height="20" viewBox="0 0 20 20" fill="none" stroke="#2a2a2a" stroke-width="1.6"><path d="M0.5 0.5 L19.5 19.5 M19.5 0.5 L0.5 19.5"/></svg>

<div class="t" style="left:656px;top:204px;font-size:18px;color:#333;-webkit-text-stroke:0.45px #333;letter-spacing:0.35px">File</div>
<div class="t" style="left:1162px;top:204px;font-size:18px;color:#555;letter-spacing:0.5px">Required</div>
<div class="a" style="left:656px;top:238px;width:585px;height:52px;border:1px solid #656565;border-radius:9px;overflow:hidden">
  <div class="a" style="left:0;top:0;width:151px;height:50px;background:#f9f9f9;border-right:1px solid #555"></div>
</div>
<div class="t" style="left:675px;top:253px;font-size:18px;color:#333;-webkit-text-stroke:0.45px #333;letter-spacing:0.7px">Choose File</div>
<div class="t" style="left:827px;top:252px;font-size:18px;color:#444;letter-spacing:0.95px">No file chosen</div>

<div class="t" style="left:656px;top:319px;font-size:18px;color:#333;-webkit-text-stroke:0.45px #333;letter-spacing:1.1px">Document name</div>
<div class="t" style="left:1162px;top:319px;font-size:18px;color:#555;letter-spacing:0.5px">Required</div>
<div class="a" style="left:656px;top:353px;width:585px;height:55px;border:1px solid #707070;border-radius:10px"></div>
<div class="t" style="left:668px;top:369px;font-size:20px;color:#8a8a8a;letter-spacing:1.15px">Input text</div>

<div class="t" style="left:656px;top:437px;font-size:18px;color:#333;-webkit-text-stroke:0.45px #333;letter-spacing:1.2px">Document type</div>
<div class="t" style="left:1162px;top:437px;font-size:18px;color:#555;letter-spacing:0.5px">Required</div>
<div class="a" style="left:656px;top:471px;width:585px;height:50px;border:2px solid #23239a;border-radius:9px;box-shadow:0 0 0 1.5px #bfd8fa"></div>
<div class="t" style="left:666px;top:484px;font-size:20px;color:#8a8a8a;letter-spacing:1.25px">Select document type</div>
<svg style="left:1213px;top:493px" width="12" height="7" viewBox="0 0 12 7" fill="none" stroke="#333" stroke-width="1.6"><path d="M1 1 L6 6 L11 1"/></svg>

<!-- textarea + footer behind dropdown -->
<div class="a" style="left:656px;top:585px;width:585px;height:138px;border:1px solid #707070;border-radius:7px"></div>
<div class="a" style="left:1100px;top:815px;width:141px;height:47px;border-radius:24px;background:#1f1f1f"></div>

<!-- dropdown listbox -->
<div class="a" style="left:657px;top:531px;width:581px;height:386px;background:#fff;border-radius:7px 7px 0 7px;box-shadow:0 0 0 1px #e9e9e9, 0 1px 2px rgba(0,0,0,0.06);overflow:hidden">
  <div class="a" style="left:565px;top:0;width:16px;height:386px;background:#f8f8f8"></div>
  <svg style="left:568px;top:6px" width="9" height="6" viewBox="0 0 9 6"><path d="M4.5 0 L9 6 H0 Z" fill="#bdbdbd"/></svg>
  <div class="a" style="left:568px;top:18px;width:9px;height:123px;border-radius:5px;background:#c1c1c1"></div>
  <svg style="left:568px;top:373px" width="9" height="6" viewBox="0 0 9 6"><path d="M4.5 6 L9 0 H0 Z" fill="#bdbdbd"/></svg>
</div>
<div class="t" style="left:740px;top:552px;font-size:18px;color:#525252;letter-spacing:0.95px">Accepted use policy</div>
<div class="t" style="left:740px;top:599px;font-size:18px;color:#525252;letter-spacing:0.95px">AI policy</div>
<div class="t" style="left:740px;top:646px;font-size:18px;color:#525252;letter-spacing:0.95px">Audit report</div>
<div class="t" style="left:740px;top:693px;font-size:18px;color:#525252;letter-spacing:0.95px">Bias analysis</div>
<div class="t" style="left:740px;top:740px;font-size:18px;color:#525252;letter-spacing:0.95px">Copyrights policy</div>
<div class="t" style="left:740px;top:787px;font-size:18px;color:#525252;letter-spacing:0.95px">Data processing agreement</div>
<div class="t" style="left:740px;top:834px;font-size:18px;color:#525252;letter-spacing:0.95px">Data protection impact assessment</div>
<div class="t" style="left:740px;top:881px;font-size:18px;color:#525252;letter-spacing:0.95px">Data protection policy</div>

</body></html>
